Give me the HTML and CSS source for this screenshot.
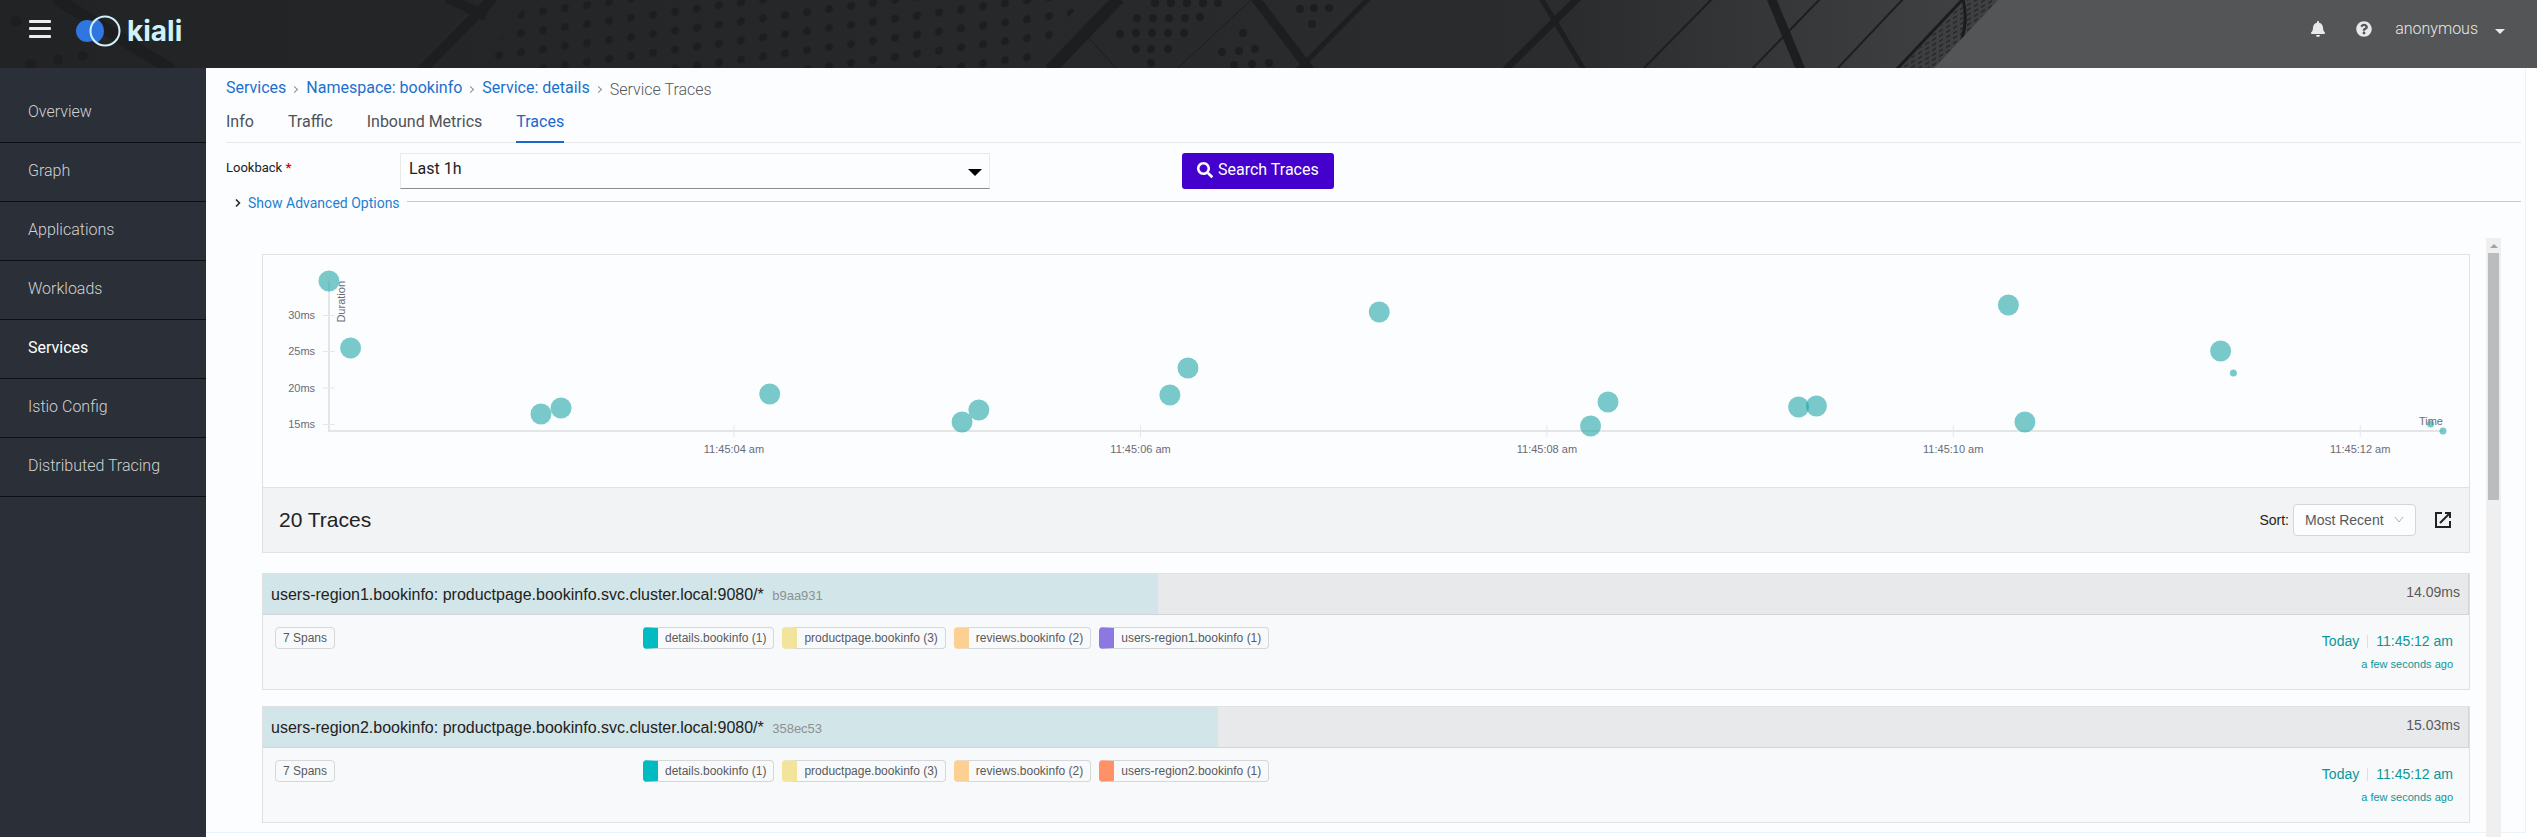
FILE: index.html
```html
<!DOCTYPE html>
<html lang="en">
<head>
<meta charset="utf-8">
<title>Kiali - Service Traces</title>
<link rel="stylesheet" href="styles.css">
</head>
<body>
<header class="masthead">
  <svg class="masthead-art" viewBox="0 0 2537 68" preserveAspectRatio="xMaxYMin slice" aria-hidden="true">
    <defs>
      <linearGradient id="mast" x1="0" x2="1" y1="0" y2="0">
        <stop offset="0" stop-color="#222325"/>
        <stop offset=".45" stop-color="#28292b"/>
        <stop offset=".62" stop-color="#2b2c2e"/>
        <stop offset=".77" stop-color="#3f4042"/>
      </linearGradient>
      <pattern id="holes" width="22" height="19" patternUnits="userSpaceOnUse" patternTransform="translate(4 2) skewY(-8)">
        <ellipse cx="11" cy="9" rx="4" ry="4" fill="#1d1e20"/>
      </pattern>
      <pattern id="grille" width="7" height="5" patternUnits="userSpaceOnUse" patternTransform="skewY(-30)">
        <rect width="4" height="2" fill="#2a2b2d"/>
      </pattern>
    </defs>
    <rect width="2537" height="68" fill="url(#mast)"/>
    <path d="M530 0H1084L1024 68H478z" fill="url(#holes)"/>
    <g fill="#1d1e20">
      <ellipse cx="16" cy="21" rx="6" ry="5"/><ellipse cx="31" cy="64" rx="6" ry="5"/><ellipse cx="58" cy="60" rx="5" ry="5"/><ellipse cx="83" cy="56" rx="5" ry="5"/>
      <circle cx="1155" cy="3" r="4"/><circle cx="1171" cy="3" r="4"/><circle cx="1187" cy="3" r="4"/><circle cx="1203" cy="3" r="4"/><circle cx="1218" cy="3" r="4"/>
      <circle cx="1137" cy="18" r="4"/><circle cx="1153" cy="18" r="4"/><circle cx="1169" cy="18" r="4"/><circle cx="1185" cy="18" r="4"/><circle cx="1200" cy="17" r="4"/>
      <circle cx="1120" cy="34" r="4"/><circle cx="1136" cy="33" r="4"/><circle cx="1152" cy="33" r="4"/><circle cx="1168" cy="33" r="4"/><circle cx="1184" cy="33" r="4"/>
      <circle cx="1136" cy="49" r="4"/><circle cx="1151" cy="49" r="4"/><circle cx="1168" cy="49" r="4"/><circle cx="1151" cy="63" r="4"/>
      <circle cx="1300" cy="9" r="4"/><circle cx="1314" cy="8" r="4"/><circle cx="1329" cy="8" r="4"/><circle cx="1312" cy="24" r="4"/>
      <circle cx="1243" cy="33" r="4"/><circle cx="1222" cy="52" r="4"/><circle cx="1239" cy="51" r="4"/><circle cx="1255" cy="49" r="4"/>
      <circle cx="1234" cy="65" r="4"/><circle cx="1252" cy="64" r="4"/><circle cx="1269" cy="63" r="4"/>
    </g>
    <g stroke="#1d1e20" fill="none">
      <path d="M55 -2L172 70" stroke-width="12"/>
      <path d="M493 -2L422 70M447 -2L486 16" stroke-width="10"/>
      <path d="M1119 -2L1050 70" stroke-width="12"/>
      <path d="M1251 0L1178 68M1085 34L1116 68" stroke-width="1"/>
      <path d="M1255 -2L1310 70M1771 -2L1801 70" stroke-width="9"/>
      <path d="M1369 -2L1298 70M1541 -2L1584 70" stroke-width="5"/>
      <path d="M1578 -2L1505 70" stroke-width="7"/>
      <path d="M1713 -2L1642 70M1821 -2L1751 70M1904 -2L1836 70" stroke-width="2"/>
    </g>
    <path d="M1966 0H1998L1934 68H1900z" fill="url(#grille)"/>
    <path d="M1963 -1L1897 69M1963 -1Q1968 20 1962 38" fill="none" stroke="#1b1c1e" stroke-width="3"/>
    <path d="M1998 0H2537V68H1934z" fill="#545557"/>
  </svg>
  <button class="icon-button" aria-label="Toggle navigation">
    <svg width="22" height="20" viewBox="0 0 22 20" aria-hidden="true"><g fill="#ededed"><rect y="1" width="22" height="3" rx="1"/><rect y="8" width="22" height="3" rx="1"/><rect y="16" width="22" height="3" rx="1"/></g></svg>
  </button>
  <a class="brand" href="#">
    <svg width="45" height="32" viewBox="0 0 45 32" aria-hidden="true">
      <circle cx="11" cy="16" r="11" fill="#2f76e0"/>
      <path d="M20 3.500Q28 8 28 16T20 28.500A14 14 0 0 1 20 3.500z" fill="#2f76e0"/>
      <circle cx="29" cy="16" r="14.500" fill="none" stroke="#d0f2fc" stroke-width="2"/>
    </svg>
    <span>kiali</span>
  </a>
  <div class="tools">
    <button class="icon-button" aria-label="Notifications">
      <svg width="14" height="16" viewBox="0 0 448 512" aria-hidden="true"><path fill="currentColor" d="M224 512c35.320 0 63.970-28.650 63.970-64H160.030c0 35.350 28.650 64 63.970 64zm215.390-149.710c-19.320-20.760-55.470-51.990-55.470-154.290 0-77.700-54.480-139.900-127.940-155.160V32c0-17.670-14.320-32-31.980-32s-31.980 14.330-31.980 32v20.840C118.560 68.100 64.080 130.300 64.080 208c0 102.300-36.150 133.530-55.470 154.290-6 6.450-8.660 14.160-8.610 21.710.110 16.400 12.980 32 32.100 32h383.800c19.120 0 32-15.600 32.100-32 .050-7.550-2.610-15.270-8.610-21.710z"/></svg>
    </button>
    <button class="icon-button" aria-label="Help">
      <svg width="16" height="16" viewBox="0 0 512 512" aria-hidden="true"><path fill="currentColor" d="M504 256c0 136.997-111.043 248-248 248S8 392.997 8 256C8 119.083 119.043 8 256 8s248 111.083 248 248zM262.655 90c-54.497 0-89.255 22.957-116.549 63.758-3.536 5.286-2.353 12.415 2.715 16.258l34.699 26.310c5.205 3.947 12.621 3.008 16.665-2.122 17.864-22.658 30.113-35.797 57.303-35.797 20.429 0 45.698 13.148 45.698 32.958 0 14.976-12.363 22.667-32.534 33.976C247.128 238.528 216 254.941 216 296v4c0 6.627 5.373 12 12 12h56c6.627 0 12-5.373 12-12v-1.333c0-28.462 83.186-29.647 83.186-106.667 0-58.002-60.165-102-116.531-102zM256 338c-25.365 0-46 20.635-46 46 0 25.364 20.635 46 46 46s46-20.636 46-46c0-25.365-20.635-46-46-46z"/></svg>
    </button>
    <button class="user"><span>anonymous</span><i class="caret"></i></button>
  </div>
</header>
<div class="body">
  <nav class="sidebar">
    <a href="#">Overview</a>
    <a href="#">Graph</a>
    <a href="#">Applications</a>
    <a href="#">Workloads</a>
    <a href="#" class="current">Services</a>
    <a href="#">Istio Config</a>
    <a href="#">Distributed Tracing</a>
  </nav>
  <main class="page">
    <nav class="breadcrumb" aria-label="Breadcrumb">
      <a href="#">Services</a><i class="sep"></i>
      <a href="#">Namespace: bookinfo</a><i class="sep"></i>
      <a href="#">Service: details</a><i class="sep"></i>
      <span>Service Traces</span>
    </nav>
    <nav class="tabs">
      <a href="#">Info</a>
      <a href="#">Traffic</a>
      <a href="#">Inbound Metrics</a>
      <a href="#" class="current">Traces</a>
    </nav>
    <form class="search">
      <label for="lookback">Lookback <b>*</b></label>
      <div class="lookback">
        <select id="lookback"><option>Last 1h</option></select>
      </div>
      <button type="button" class="primary">
        <svg width="16" height="16" viewBox="0 0 512 512" aria-hidden="true"><path fill="currentColor" d="M505 442.700L405.300 343c-4.500-4.500-10.600-7-17-7H372c27.600-35.300 44-79.700 44-128C416 93.100 322.900 0 208 0S0 93.100 0 208s93.100 208 208 208c48.300 0 92.700-16.400 128-44v16.300c0 6.400 2.500 12.500 7 17l99.700 99.700c9.400 9.400 24.600 9.400 33.900 0l28.300-28.300c9.400-9.400 9.400-24.600.1-34zM208 336c-70.700 0-128-57.200-128-128 0-70.700 57.200-128 128-128 70.700 0 128 57.200 128 128 0 70.700-57.200 128-128 128z"/></svg>
        <span>Search Traces</span>
      </button>
    </form>
    <div class="advanced">
      <svg width="6" height="8" viewBox="0 0 6 8" aria-hidden="true"><path d="M1 0.500L4.500 4L1 7.500" fill="none" stroke="#222" stroke-width="1.500"/></svg>
      <button type="button">Show Advanced Options</button>
      <hr>
    </div>
    <div class="scroll">
      <div class="results">
        <section class="summary">
          <svg class="chart" role="img" aria-label="Trace duration over time">
            <g class="axis">
              <line x1="2.99%" x2="2.99%" y1="26" y2="177"/>
              <line x1="2.99%" x2="98.82%" y1="176" y2="176"/>
            </g>
            <g class="ticks">
              <line x1="2.72%" x2="3.26%" y1="60.500" y2="60.500"/><line x1="2.72%" x2="3.26%" y1="96.500" y2="96.500"/>
              <line x1="2.72%" x2="3.26%" y1="133" y2="133"/><line x1="2.72%" x2="3.26%" y1="169.500" y2="169.500"/>
              <line x1="21.35%" x2="21.35%" y1="170" y2="182"/><line x1="39.78%" x2="39.78%" y1="170" y2="182"/>
              <line x1="58.2%" x2="58.2%" y1="170" y2="182"/><line x1="76.62%" x2="76.62%" y1="170" y2="182"/>
              <line x1="95.07%" x2="95.07%" y1="170" y2="182"/>
            </g>
            <g class="y-labels">
              <text x="2.36%" y="64">30ms</text><text x="2.36%" y="100">25ms</text>
              <text x="2.36%" y="137">20ms</text><text x="2.36%" y="173">15ms</text>
              <text x="98.82%" y="170">Time</text>
            </g>
            <svg x="2.99%" y="26" overflow="visible"><text class="rotated" x="0" y="16" transform="rotate(-90)">Duration</text></svg>
            <g class="x-labels">
              <text x="21.35%" y="198">11:45:04 am</text><text x="39.78%" y="198">11:45:06 am</text>
              <text x="58.2%" y="198">11:45:08 am</text><text x="76.62%" y="198">11:45:10 am</text>
              <text x="95.07%" y="198">11:45:12 am</text>
            </g>
            <g class="dots">
              <circle cx="2.99%" cy="26" r="10.5"/><circle cx="3.97%" cy="93" r="10.5"/>
              <circle cx="12.6%" cy="159" r="10.5"/><circle cx="13.51%" cy="153" r="10.5"/>
              <circle cx="22.97%" cy="139" r="10.5"/><circle cx="31.69%" cy="167" r="10.5"/>
              <circle cx="32.45%" cy="155" r="10.5"/><circle cx="41.11%" cy="140" r="10.5"/>
              <circle cx="41.93%" cy="113" r="10.5"/><circle cx="50.6%" cy="57" r="10.5"/>
              <circle cx="60.18%" cy="171" r="10.5"/><circle cx="60.97%" cy="147" r="10.5"/>
              <circle cx="69.61%" cy="152" r="10.5"/><circle cx="70.42%" cy="151" r="10.5"/>
              <circle cx="79.12%" cy="50" r="10.5"/><circle cx="79.87%" cy="167" r="10.5"/>
              <circle cx="88.74%" cy="96" r="10.5"/><circle cx="89.32%" cy="118" r="3.5"/>
              <circle cx="98.26%" cy="169" r="3.5"/><circle cx="98.82%" cy="176" r="3.5"/>
            </g>
          </svg>
          <div class="summary-bar">
            <h2>20 Traces</h2>
            <label for="sort">Sort:</label>
            <div class="sort">
              <select id="sort"><option>Most Recent</option></select>
              <svg width="10" height="7" viewBox="0 0 10 7" aria-hidden="true"><path d="M1 1L5 6L9 1" fill="none" stroke="#b0b1b3"/></svg>
            </div>
            <a class="external" href="#" aria-label="Open in new window">
              <svg width="18" height="18" viewBox="0 0 18 18" aria-hidden="true"><path d="M8 2H2V16H16V10M11 2H16V7M16 2L6 12" fill="none" stroke="#222" stroke-width="2"/></svg>
            </a>
          </div>
        </section>
        <article class="trace">
          <header>
            <div class="fill" style="width:40.57%"></div>
            <h3>users-region1.bookinfo: productpage.bookinfo.svc.cluster.local:9080/* <small>b9aa931</small></h3>
            <span class="duration">14.09ms</span>
          </header>
          <div class="detail">
            <div class="spans"><span class="tag">7 Spans</span></div>
            <ul>
              <li class="tag service teal">details.bookinfo (1)</li>
              <li class="tag service yellow">productpage.bookinfo (3)</li>
              <li class="tag service orange">reviews.bookinfo (2)</li>
              <li class="tag service purple">users-region1.bookinfo (1)</li>
            </ul>
            <div class="when"><p><span>Today</span><span>11:45:12 am</span></p><small>a few seconds ago</small></div>
          </div>
        </article>
        <article class="trace">
          <header>
            <div class="fill" style="width:43.29%"></div>
            <h3>users-region2.bookinfo: productpage.bookinfo.svc.cluster.local:9080/* <small>358ec53</small></h3>
            <span class="duration">15.03ms</span>
          </header>
          <div class="detail">
            <div class="spans"><span class="tag">7 Spans</span></div>
            <ul>
              <li class="tag service teal">details.bookinfo (1)</li>
              <li class="tag service yellow">productpage.bookinfo (3)</li>
              <li class="tag service orange">reviews.bookinfo (2)</li>
              <li class="tag service coral">users-region2.bookinfo (1)</li>
            </ul>
            <div class="when"><p><span>Today</span><span>11:45:12 am</span></p><small>a few seconds ago</small></div>
          </div>
        </article>
      </div>
      <div class="scrollbar" aria-hidden="true"><i class="up"></i><i class="thumb"></i></div>
    </div>
  </main>
</div>
</body>
</html>
```
FILE: styles.css
```css
* { box-sizing: border-box; }

body {
  margin: 0;
  height: 100vh;
  display: flex;
  flex-direction: column;
  overflow: hidden;
  background: #fff;
  color: #222;
  font: 16px/24px Roboto, "Open Sans", sans-serif;
}

a { color: inherit; text-decoration: none; }
button, select { font: inherit; color: inherit; }
button { border: 0; padding: 0; background: none; cursor: pointer; }
h2, h3, p, ul { margin: 0; padding: 0; font-weight: 400; }

/* Masthead */
.masthead {
  position: relative;
  flex: none;
  display: flex;
  align-items: center;
  height: 68px;
  padding: 0 32px 10px 29px;
  background: #28292b;
}
.masthead-art { position: absolute; left: 0; top: 0; width: 100%; height: 68px; }
.masthead > :not(.masthead-art) { position: relative; }
.icon-button { display: flex; color: #e8e9ea; }
.brand {
  display: flex;
  align-items: center;
  gap: 6px;
  margin-left: 25px;
  padding-top: 4px;
  color: #d0f2fc;
  font: 700 28px/32px Inter, sans-serif;
}
.tools { display: flex; align-items: center; margin-left: auto; color: #e8e9ea; }
.tools .icon-button + .icon-button { margin-left: 31px; }
.user { display: flex; align-items: center; gap: 17px; margin-left: 23px; font-weight: 300; }
.caret {
  margin-top: 4px;
  border: 5px solid transparent;
  border-top-color: currentColor;
  border-bottom: 0;
}

/* Sidebar */
.body { flex: 1; display: flex; min-height: 0; }
.sidebar { flex: none; width: 206px; padding-top: 16px; background: #2b2f38; }
.sidebar a {
  display: block;
  height: 59px;
  padding: 16px 28px;
  border-bottom: 1px solid #0d0f12;
  color: #d1d2d4;
  font-weight: 300;
}
.sidebar .current { color: #fff; font-weight: 400; }

/* Page */
.page {
  position: relative;
  isolation: isolate;
  flex: 1;
  min-width: 0;
  display: flex;
  flex-direction: column;
  padding: 8px 16px 0 20px;
}
.page::before {
  content: "";
  position: absolute;
  z-index: -1;
  inset: 0 11px 4px 0;
  border: 1px solid #eaf3fa;
  border-width: 0 1px 1px 0;
  background: #fcfdff;
}
.breadcrumb { display: flex; align-items: center; height: 24px; color: #1c70cc; }
.breadcrumb span { color: #56585c; padding-top: 3px; font-weight: 300; }
.sep {
  width: 5px;
  height: 5px;
  margin: 3px 9px 0 6px;
  border: 1px solid #8a8d90;
  border-width: 1px 1px 0 0;
  rotate: 45deg;
}
.tabs { display: flex; gap: 34px; margin-top: 10px; border-bottom: 1px solid #e7e8ea; }
.tabs a { height: 33px; margin-bottom: -1px; color: #4f5255; }
.tabs .current { color: #1c66cc; border-bottom: 2px solid #1c66cc; }

.search {
  display: grid;
  grid-template-columns: 174px 590fr 192fr 1339fr;
  margin-top: 10px;
  height: 36px;
}
.search label { font-size: 13px; line-height: 30px; }
.search label b { color: #d00; }
.lookback { position: relative; }
.lookback select {
  display: block;
  width: 100%;
  height: 36px;
  padding: 0 8px 4px;
  appearance: none;
  border: 1px solid #e9e9ea;
  border-bottom-color: #8a8d90;
  border-radius: 0;
  background: transparent;
}
.lookback::after {
  content: "";
  position: absolute;
  right: 8px;
  top: 16px;
  border: 7px solid transparent;
  border-top-color: #000;
  border-bottom: 0;
}
.primary {
  grid-column: 4;
  justify-self: start;
  display: flex;
  align-items: center;
  gap: 5px;
  padding: 0 15px 3px;
  border-radius: 3px;
  background: #4400cc;
  color: #fff;
}

.advanced {
  display: flex;
  align-items: center;
  height: 24px;
  margin-top: 2px;
  padding-left: 9px;
  font-size: 14px;
  color: #1f7fd1;
}
.advanced button { margin: 0 7px; }
.advanced hr { flex: 1; margin: 0 0 4px; border: 0; border-top: 1px solid #c7c9cb; }

/* Results */
.scroll {
  flex: 1;
  min-height: 0;
  display: flex;
  gap: 16px;
  margin-top: 23px;
  padding: 0 20px 0 36px;
  overflow: hidden;
  font: 14px/21px "Liberation Sans", Arial, sans-serif;
}
.results { flex: 1; min-width: 0; padding-top: 16px; }
.scrollbar {
  flex: none;
  display: flex;
  flex-direction: column;
  align-items: center;
  width: 15px;
  background: #efeff0;
}
.up { height: 4px; margin: 6px 0 5px; border: 4px solid transparent; border-bottom-color: #a0a1a3; border-top: 0; }
.thumb { width: 11px; height: 247px; background: #bbbcbe; }

.summary { border: 1px solid #e0e1e3; }
.chart { display: block; width: 100%; height: 232px; font-size: 11px; fill: #6b6b76; }
.axis line { stroke: #e4e5e7; stroke-width: 2; }
.ticks line { stroke: #e6e7e9; }
.y-labels, .rotated { text-anchor: end; }
.x-labels { text-anchor: middle; }
.dots { fill: #12a0a3; fill-opacity: .56; }

.summary-bar {
  display: flex;
  align-items: center;
  height: 65px;
  padding: 0 17px 0 16px;
  border-top: 1px solid #e0e1e3;
  background: #f2f3f4;
}
.summary-bar h2 { flex: 1; font-size: 21px; line-height: 28px; }
.sort { position: relative; margin: 0 18px 0 4px; }
.sort select {
  display: block;
  width: 123px;
  height: 32px;
  padding: 0 11px;
  appearance: none;
  border: 1px solid #d4d5d7;
  border-radius: 4px;
  background: #fcfdff;
  color: #58595b;
}
.sort svg { position: absolute; right: 12px; top: 12px; pointer-events: none; }
.external { display: flex; }

.trace { margin-top: 16px; border: 1px solid #e0e1e3; background: #f8f9fb; }
.summary + .trace { margin-top: 20px; }
.trace header {
  position: relative;
  display: flex;
  justify-content: space-between;
  height: 41px;
  padding: 0 8px;
  border: 1px solid #d2d4d6;
  border-width: 0 1px 1px 0;
  background: #e8e9ea;
}
.fill { position: absolute; left: 0; top: 0; bottom: 0; background: #d2e5e8; }
.trace h3 { position: relative; font-size: 16px; line-height: 41px; }
.trace h3 small { font-size: 13px; margin-left: 4px; color: #8b9294; }
.duration { line-height: 36px; color: #58595b; }
.detail {
  display: grid;
  grid-template-columns: 368px 1fr auto;
  height: 74px;
  padding: 12px 16px 0 12px;
}
.detail ul { display: flex; gap: 8px; align-items: flex-start; list-style: none; }
.spans { display: flex; align-items: flex-start; }
.tag {
  height: 22px;
  padding: 0 7px;
  border: 1px solid #d6d7d9;
  border-radius: 4px;
  font-size: 12px;
  line-height: 20px;
  color: #58595b;
}
.service { border-left-width: 15px; }
.teal { border-left-color: #00bcc0; }
.yellow { border-left-color: #f2e49b; }
.orange { border-left-color: #fcd093; }
.purple { border-left-color: #8c78e0; }
.coral { border-left-color: #ff9168; }
.when { padding-top: 4px; text-align: right; color: #0a9799; }
.when p { display: flex; line-height: 21px; }
.when span + span { margin-left: 8px; position: relative; padding-left: 9px; }
.when span + span::before {
  content: "";
  position: absolute;
  left: 0;
  top: 4px;
  width: 1px;
  height: 13px;
  background: #dddfe1;
}
.when small { display: block; font-size: 11px; line-height: 24px; }
```
